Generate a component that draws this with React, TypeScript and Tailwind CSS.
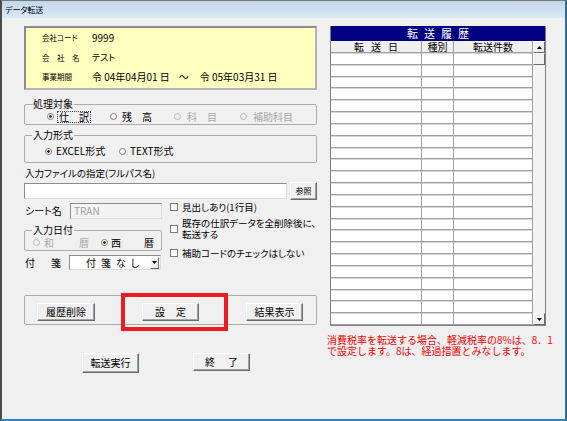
const rows = Array.from({ length: 23 });

function Radio({ on, off }: { on?: boolean; off?: boolean }) {
  return (
    <svg width="7" height="7" viewBox="0 0 7 7" className="shrink-0">
      <circle
        cx="3.5"
        cy="3.5"
        r="3"
        fill={off ? "#f0f0f0" : "#ffffff"}
        stroke={off ? "#b8b8b8" : "#7d7d7d"}
        strokeWidth="1"
      />
      {on && <circle cx="3.5" cy="3.5" r="1.3" fill="#111111" />}
    </svg>
  );
}

function Check() {
  return <span className="w-[8px] h-[8px] shrink-0 border border-[#7a7a7a] bg-white" />;
}

function Btn({ w, children }: { w: string; children: React.ReactNode }) {
  return (
    <div
      className={`${w} h-[18px] flex items-center justify-center bg-[#f0f0f0] border border-t-white border-l-white border-r-[#6b6b6b] border-b-[#6b6b6b] shadow-[inset_-1px_-1px_0_#a3a3a3] text-[10px]`}
    >
      {children}
    </div>
  );
}

function Arrow({ up }: { up?: boolean }) {
  return (
    <div className="h-[12px] flex items-center justify-center bg-[#f0f0f0] border border-t-white border-l-white border-r-[#6b6b6b] border-b-[#6b6b6b]">
      <svg width="5" height="3" viewBox="0 0 5 3">
        <path d={up ? "M0 3 L2.5 0 L5 3 Z" : "M0 0 L2.5 3 L5 0 Z"} fill="#000" />
      </svg>
    </div>
  );
}

export default function App() {
  return (
    <div className="w-[567px] h-[421px] overflow-hidden flex flex-col bg-[#f0f0f0] border-t border-l-2 border-r-2 border-b-2 border-t-[#7a7a7a] border-l-[#4d4d4d] border-r-[#2f6c8f] border-b-[#2e86bb] font-['Noto_Sans_CJK_JP','Noto_Sans',sans-serif] text-[10px] leading-[10px] text-black [font-feature-settings:'palt']">
      {/* title bar */}
      <div className="h-[17px] shrink-0 flex items-center pl-[3px] bg-linear-to-b from-[#c3d6ec] to-[#dce8f5] text-[8px]">
        データ転送
      </div>

      <div className="flex pl-[22px] pt-[8px]">
        {/* left column */}
        <div className="w-[293px] flex flex-col">
          {/* company info */}
          <div className="h-[64px] flex flex-col pl-[16px] bg-[#ffffc0] border-2 border-t-[#8c8c8c] border-l-[#8c8c8c] border-r-[#b4b4b4] border-b-[#b4b4b4]">
            <div className="h-[20px] flex items-center">
              <span className="w-[50px] text-[7.5px]">会社コード</span>
              <span className="text-[10px]">9999</span>
            </div>
            <div className="h-[19px] flex items-center">
              <span className="w-[50px] text-[7.5px]">会　社　名</span>
              <span className="text-[9px]">テスト</span>
            </div>
            <div className="h-[20px] flex items-center text-[10px]">
              <span className="w-[50px] text-[7.5px]">事業期間</span>
              <span>令 04年04月01 日</span>
              <span className="ml-[9px]">～</span>
              <span className="ml-[11px]">令 05年03月31 日</span>
            </div>
          </div>

          {/* 処理対象 */}
          <fieldset className="mt-[9px] border border-[#ababab] rounded-[2px]">
            <legend className="ml-[7px] px-[1px] leading-[10px]">処理対象</legend>
            <div className="h-[15px] flex items-center pl-[22px]">
              <div className="w-[63px] flex items-center">
                <Radio on />
                <span className="ml-[3px] px-[1px] border border-dotted border-[#444]">仕　訳</span>
              </div>
              <div className="w-[64px] flex items-center">
                <Radio />
                <span className="ml-[5px]">残　高</span>
              </div>
              <div className="w-[66px] flex items-center text-[#a8a8a8]">
                <Radio off />
                <span className="ml-[6px]">科　目</span>
              </div>
              <div className="flex items-center text-[#a8a8a8]">
                <Radio off />
                <span className="ml-[6px]">補助科目</span>
              </div>
            </div>
          </fieldset>

          {/* 入力形式 */}
          <fieldset className="mt-[5px] border border-[#ababab] rounded-[2px]">
            <legend className="ml-[7px] px-[1px] leading-[10px]">入力形式</legend>
            <div className="h-[22px] flex items-center pl-[20px]">
              <div className="w-[74px] flex items-center">
                <Radio on />
                <span className="ml-[4px]">EXCEL形式</span>
              </div>
              <div className="flex items-center">
                <Radio />
                <span className="ml-[4px]">TEXT形式</span>
              </div>
            </div>
          </fieldset>

          <div className="mt-[5px] pl-[1px] text-[9.5px]">入力ファイルの指定(フルパス名)</div>

          <div className="mt-[4px] h-[18px] flex items-center">
            <div className="w-[263px] h-[16px] bg-white border border-t-[#8c8c8c] border-l-[#8c8c8c] border-r-[#dcdcdc] border-b-[#dcdcdc]" />
            <div className="ml-[3px]">
              <Btn w="w-[27px]">
                <span className="text-[8px]">参照</span>
              </Btn>
            </div>
          </div>

          {/* lower block */}
          <div className="flex">
            <div className="w-[138px] flex flex-col">
              <div className="mt-[3px] h-[16px] flex items-center">
                <span className="w-[46px] pl-[1px]">シート名</span>
                <div className="w-[92px] h-[16px] flex items-center pl-[3px] text-[#a0a0a0] bg-[#f4f4f4] border border-t-[#8c8c8c] border-l-[#8c8c8c] border-r-[#dcdcdc] border-b-[#dcdcdc]">
                  TRAN
                </div>
              </div>

              <fieldset className="mt-[6px] border border-[#ababab] rounded-[2px]">
                <legend className="ml-[7px] px-[1px] leading-[10px]">入力日付</legend>
                <div className="h-[15px] flex items-center pl-[8px]">
                  <div className="w-[68px] flex items-center text-[#a8a8a8]">
                    <Radio off />
                    <span className="ml-[4px]">和</span>
                    <span className="ml-[25px]">暦</span>
                  </div>
                  <div className="flex items-center">
                    <Radio on />
                    <span className="ml-[3px]">西</span>
                    <span className="ml-[23px]">暦</span>
                  </div>
                </div>
              </fieldset>

              <div className="mt-[4px] h-[15px] flex items-center">
                <span className="w-[45px] pl-[1px]">
                  付<span className="ml-[16px]">箋</span>
                </span>
                <div className="w-[92px] h-[15px] flex items-center bg-white border border-t-[#8c8c8c] border-l-[#8c8c8c] border-r-[#dcdcdc] border-b-[#dcdcdc]">
                  <span className="flex-1 pl-[16px] tracking-[5px]">付箋なし</span>
                  <div className="w-[9px] h-[12px] mr-[1px] flex items-center justify-center bg-[#f0f0f0] border border-t-white border-l-white border-r-[#6b6b6b] border-b-[#6b6b6b]">
                    <svg width="5" height="3" viewBox="0 0 5 3">
                      <path d="M0 0 L2.5 3 L5 0 Z" fill="#000" />
                    </svg>
                  </div>
                </div>
              </div>
            </div>

            <div className="ml-[8px] flex flex-col text-[9.5px]">
              <div className="h-[14px] flex items-center">
                <Check />
                <span className="ml-[4px]">見出しあり(1行目)</span>
              </div>
              <div className="mt-[4px] flex items-center">
                <Check />
                <span className="ml-[4px] flex flex-col">
                  <span className="h-[11px] leading-[11px]">既存の仕訳データを全削除後に、</span>
                  <span className="h-[11px] leading-[11px]">転送する</span>
                </span>
              </div>
              <div className="mt-[6px] h-[14px] flex items-center">
                <Check />
                <span className="ml-[4px]">補助コードのチェックはしない</span>
              </div>
            </div>
          </div>

          {/* button frame */}
          <div className="relative mt-[25px] h-[30px] flex pt-[7px] pl-[12px] border border-[#ababab] rounded-[2px]">
            <Btn w="w-[58px]">履歴削除</Btn>
            <div className="ml-[47px]">
              <Btn w="w-[57px]">
                設<span className="ml-[11px]">定</span>
              </Btn>
            </div>
            <div className="ml-[47px]">
              <Btn w="w-[57px]">結果表示</Btn>
            </div>
            <div className="absolute left-[96px] top-[-3px] w-[107px] h-[38px] border-4 border-[#ed1c24]" />
          </div>

          <div className="mt-[28px] flex pl-[58px]">
            <Btn w="w-[57px] h-[20px]">転送実行</Btn>
            <div className="ml-[54px]">
              <Btn w="w-[57px]">
                終<span className="ml-[13px]">了</span>
              </Btn>
            </div>
          </div>
        </div>

        {/* right column */}
        <div className="ml-[13px] w-[216px] flex flex-col">
          <div className="border-x border-b border-[#7f7f7f] bg-white flex flex-col">
            <div className="h-[15px] flex items-center justify-center pl-[6px] bg-[#000080] text-white text-[11px] leading-[11px] tracking-[6px]">
              転送履歴
            </div>
            <div className="flex">
              <div className="w-[202px] flex flex-col">
                <div className="h-[12px] flex bg-[#f0f0f0] border-b border-[#a0a0a0]">
                  <div className="w-[91px] border-r border-[#a0a0a0] flex items-center justify-center tracking-[7px] pl-[7px]">
                    転送日
                  </div>
                  <div className="w-[32px] border-r border-[#a0a0a0] flex items-center justify-center">
                    種別
                  </div>
                  <div className="w-[79px] border-r border-[#a0a0a0] flex items-center justify-center">
                    転送件数
                  </div>
                </div>
                <div className="h-[272px] flex flex-col">
                  {rows.map((_, i) => (
                    <div
                      key={i}
                      className="flex-1 flex border-b border-[#a0a0a0] shadow-[inset_0_1px_0_#d8d8d8]"
                    >
                      <div className="w-[91px] border-r border-[#a0a0a0]" />
                      <div className="w-[32px] border-r border-[#a0a0a0]" />
                      <div className="w-[79px] border-r border-[#a0a0a0]" />
                    </div>
                  ))}
                </div>
              </div>
              <div className="w-[12px] flex flex-col bg-[#f3f3f3]">
                <Arrow up />
                <div className="h-[12px] bg-[#f0f0f0] border border-t-white border-l-white border-r-[#6b6b6b] border-b-[#6b6b6b]" />
                <div className="flex-1" />
                <Arrow />
              </div>
            </div>
          </div>

          <div className="mt-[8px] -ml-[3px] w-[230px] flex flex-col whitespace-nowrap text-[10px] text-[#ff0000] [font-feature-settings:normal]">
            <span className="h-[11px] leading-[11px]">消費税率を転送する場合、軽減税率の8%は、8．1</span>
            <span className="h-[11px] leading-[11px]">で設定します。8は、経過措置とみなします。</span>
          </div>
        </div>
      </div>
    </div>
  );
}
